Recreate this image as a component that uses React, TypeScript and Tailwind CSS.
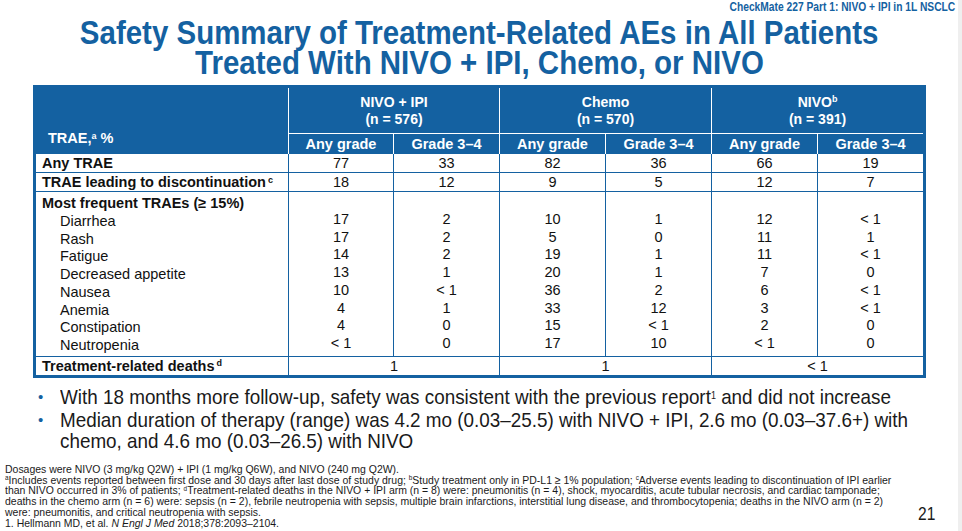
import { Fragment } from 'react';

// Arial Narrow is not installed, so the slide text is Liberation Sans squeezed to narrow widths
const sans = "font-['Liberation_Sans',Arial,sans-serif]";
const squeeze = 'whitespace-nowrap scale-x-[0.82]';

const frequent = [
  { name: 'Diarrhea', values: ['17', '2', '10', '1', '12', '< 1'] },
  { name: 'Rash', values: ['17', '2', '5', '0', '11', '1'] },
  { name: 'Fatigue', values: ['14', '2', '19', '1', '11', '< 1'] },
  { name: 'Decreased appetite', values: ['13', '1', '20', '1', '7', '0'] },
  { name: 'Nausea', values: ['10', '< 1', '36', '2', '6', '< 1'] },
  { name: 'Anemia', values: ['4', '1', '33', '12', '3', '< 1'] },
  { name: 'Constipation', values: ['4', '0', '15', '< 1', '2', '0'] },
  { name: 'Neutropenia', values: ['< 1', '0', '17', '10', '< 1', '0'] },
];

const groups = [
  { name: 'NIVO + IPI', sup: '', n: '(n = 576)' },
  { name: 'Chemo', sup: '', n: '(n = 570)' },
  { name: 'NIVO', sup: 'b', n: '(n = 391)' },
];

const body = 'border border-[#1461a1] p-0 text-center align-top';
const note = 'origin-left whitespace-nowrap scale-x-[0.91]';
const bullet = 'origin-left whitespace-nowrap scale-x-[0.898]';

function SafetyTable() {
  return (
    <table className={`${sans} ml-[33px] mt-[7px] w-[890px] table-fixed border-collapse border-[3px] border-[#1461a1] text-[14.5px] text-[#111]`}>
      <colgroup>
        <col className="w-[254px]" />
        <col className="w-[105px]" />
        <col className="w-[106px]" />
        <col className="w-[106px]" />
        <col className="w-[106px]" />
        <col className="w-[106px]" />
        <col className="w-[107px]" />
      </colgroup>
      <thead>
        <tr className="bg-[#1461a1] font-bold text-white">
          <th rowSpan={2} className="border-r border-white pb-[6px] pl-[12px] text-left align-bottom leading-[18px]">
            TRAE,<sup className="text-[9px]">a</sup> %
          </th>
          {groups.map((g) => (
            <th key={g.name} colSpan={2} className="h-[47px] border-x border-b border-white p-0 text-[14px] leading-[17px]">
              {g.name}
              {g.sup && <sup className="text-[9px]">{g.sup}</sup>}
              <br />
              {g.n}
            </th>
          ))}
        </tr>
        <tr className="bg-[#1461a1] font-bold text-white">
          {groups.map((g) => (
            <Fragment key={g.name}>
              <th className="h-[20px] border-x border-white p-0 leading-[18px]">Any grade</th>
              <th className="h-[20px] border-x border-white p-0 leading-[18px]">Grade 3–4</th>
            </Fragment>
          ))}
        </tr>
      </thead>
      <tbody className="leading-[18px]">
        <tr>
          <td className={`${body} pl-[6px] text-left font-bold`}>Any TRAE</td>
          {['77', '33', '82', '36', '66', '19'].map((v, i) => (
            <td key={i} className={body}>{v}</td>
          ))}
        </tr>
        <tr>
          <td className={`${body} pl-[6px] text-left font-bold`}>
            TRAE leading to discontinuation<sup className="ml-[2px] text-[9px]">c</sup>
          </td>
          {['18', '12', '9', '5', '12', '7'].map((v, i) => (
            <td key={i} className={body}>{v}</td>
          ))}
        </tr>
        <tr className="leading-[17.75px]">
          <td className={`${body} pb-[1px] pl-[6px] pt-[3px] text-left`}>
            <div className="font-bold">Most frequent TRAEs (≥ 15%)</div>
            {frequent.map((f) => (
              <div key={f.name} className="pl-[18px]">{f.name}</div>
            ))}
          </td>
          {[0, 1, 2, 3, 4, 5].map((i) => (
            <td key={i} className={`${body} pt-[1px]`}>
              <div>&nbsp;</div>
              {frequent.map((f) => (
                <div key={f.name}>{f.values[i]}</div>
              ))}
            </td>
          ))}
        </tr>
        <tr>
          <td className={`${body} pl-[6px] text-left font-bold`}>
            Treatment-related deaths<sup className="ml-[2px] text-[9px]">d</sup>
          </td>
          <td colSpan={2} className={body}>1</td>
          <td colSpan={2} className={body}>1</td>
          <td colSpan={2} className={body}>&lt; 1</td>
        </tr>
      </tbody>
    </table>
  );
}

export default function App() {
  return (
    <div className={`${sans} flex h-[531px] w-[962px] overflow-hidden bg-white`}>
      <div className="flex w-[958px] flex-col">
        <div className="pr-[3px] pt-[1px] text-right text-[12.5px] font-bold leading-[12px] text-[#1461a1]">
          <span className={`inline-block origin-right ${squeeze}`}>CheckMate 227 Part 1: NIVO + IPI in 1L NSCLC</span>
        </div>
        <h1 className="mt-[5px] flex flex-col items-center text-[33px] font-bold leading-[30px] text-[#1461a1]">
          <div className="whitespace-nowrap scale-x-[0.893]">Safety Summary of Treatment-Related AEs in All Patients</div>
          <div className="whitespace-nowrap scale-x-[0.893]">Treated With NIVO + IPI, Chemo, or NIVO</div>
        </h1>

        <SafetyTable />

        <ul className="mt-[8px] pl-[38px] text-[21px] leading-[21.5px] text-[#1a1a1a]">
          <li className="flex">
            <span className="w-[22px] shrink-0 text-[15px] text-[#1461a1]">•</span>
            <span className={bullet}>
              With 18 months more follow-up, safety was consistent with the previous report
              <sup className="text-[10px]">1</sup> and did not increase
            </span>
          </li>
          <li className="mt-[1.5px] flex">
            <span className="w-[22px] shrink-0 text-[15px] text-[#1461a1]">•</span>
            <span className={bullet}>
              Median duration of therapy (range) was 4.2 mo (0.03–25.5) with NIVO + IPI, 2.6 mo (0.03–37.6+) with
              <br />
              chemo, and 4.6 mo (0.03–26.5) with NIVO
            </span>
          </li>
        </ul>

        <div className="mt-auto flex items-end pb-[2.5px]">
          <div className="min-w-0 flex-1 pl-[5px] text-[11.5px] leading-[10.8px] text-[#1a1a1a]">
            <div className={note}>
              Dosages were NIVO (3 mg/kg Q2W) + IPI (1 mg/kg Q6W), and NIVO (240 mg Q2W).
            </div>
            <div className={note}>
              <sup className="text-[7px]">a</sup>Includes events reported between first dose and 30 days after last dose of study drug;{' '}
              <sup className="text-[7px]">b</sup>Study treatment only in PD-L1 ≥ 1% population;{' '}
              <sup className="text-[7px]">c</sup>Adverse events leading to discontinuation of IPI earlier
            </div>
            <div className={note}>
              than NIVO occurred in 3% of patients; <sup className="text-[7px]">d</sup>Treatment-related deaths in the NIVO + IPI arm (n = 8) were: pneumonitis (n = 4), shock, myocarditis, acute tubular necrosis, and cardiac tamponade;
            </div>
            <div className={note}>
              deaths in the chemo arm (n = 6) were: sepsis (n = 2), febrile neutropenia with sepsis, multiple brain infarctions, interstitial lung disease, and thrombocytopenia; deaths in the NIVO arm (n = 2)
            </div>
            <div className={note}>were: pneumonitis, and critical neutropenia with sepsis.</div>
            <div className={note}>
              1. Hellmann MD, et al. <i>N Engl J Med</i> 2018;378:2093–2104.
            </div>
          </div>
          <div className="mb-[6px] w-[40px] shrink-0 text-[19px] leading-[18px] text-[#1a1a1a]">
            <div className={`origin-left ${squeeze}`}>21</div>
          </div>
        </div>
      </div>
      <div className="flex-1 bg-[#efefef]" />
    </div>
  );
}
